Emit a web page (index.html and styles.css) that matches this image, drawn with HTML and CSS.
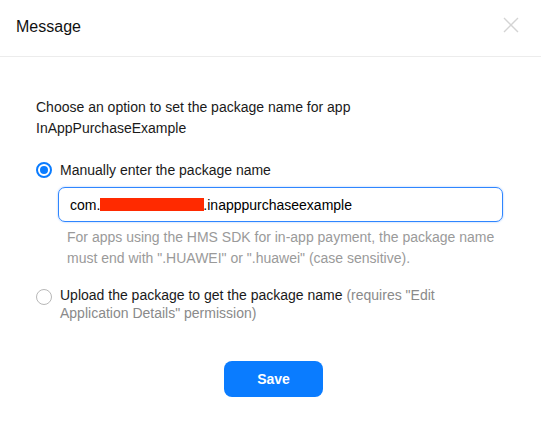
FILE: index.html
```html
<!DOCTYPE html>
<html>
<head>
<meta charset="utf-8">
<link rel="stylesheet" href="styles.css">
</head>
<body>
<div class="dialog">
  <div class="header">
    <span class="title">Message</span>
    <svg class="close" width="16" height="16" viewBox="0 0 16 16"><path d="M1 1L15 15M15 1L1 15" stroke="#d4d4d4" stroke-width="1.4" fill="none"/></svg>
  </div>
  <div class="body">
    <p class="intro">Choose an option to set the package name for app<br>InAppPurchaseExample</p>
    <div class="option first">
      <span class="radio checked"></span>
      <span class="label">Manually enter the package name</span>
    </div>
    <div class="input">com.<span class="redact"></span>.inapppurchaseexample</div>
    <p class="hint">For apps using the HMS SDK for in-app payment, the package name<br>must end with ".HUAWEI" or ".huawei" (case sensitive).</p>
    <div class="option second">
      <span class="radio"></span>
      <span class="label">Upload the package to get the package name <span class="muted">(requires "Edit Application Details" permission)</span></span>
    </div>
    <div class="actions">
      <button class="save">Save</button>
    </div>
  </div>
</div>
</body>
</html>
```
FILE: styles.css
```css
html, body {
  margin: 0;
  padding: 0;
  background: #fff;
}
body {
  font-family: "Liberation Sans", Arial, sans-serif;
  font-size: 14px;
  color: #1a1a1a;
}
.dialog {
  width: 541px;
  height: 428px;
  background: #fff;
}
.header {
  height: 57px;
  box-sizing: border-box;
  border-bottom: 1px solid #ececec;
  display: flex;
  align-items: center;
  justify-content: space-between;
  padding: 0 22px 0 16px;
}
.title {
  font-size: 16px;
  color: #111;
  margin-top: -3px;
}
.close {
  margin-top: -7px;
}
.body {
  padding: 40px 38px 0 36px;
}
.intro {
  margin: 0;
  line-height: 21px;
}
.option {
  display: flex;
  align-items: flex-start;
}
.option.first {
  margin-top: 20px;
  line-height: 22px;
}
.option.first .radio {
  margin-top: 3px;
}
.option.second {
  margin-top: 17px;
  line-height: 18px;
}
.option.second .radio {
  margin-top: 3px;
}
.radio {
  flex: none;
  width: 16px;
  height: 16px;
  box-sizing: border-box;
  border: 1px solid #b8b8b8;
  border-radius: 50%;
  margin-right: 8px;
  position: relative;
}
.radio.checked {
  border: 2px solid #0a7cff;
}
.radio.checked::after {
  content: "";
  position: absolute;
  left: 2px;
  top: 2px;
  width: 8px;
  height: 8px;
  border-radius: 50%;
  background: #0a7cff;
}
.muted {
  color: #8a8a8a;
}
.input {
  margin: 6px 0 0 22px;
  height: 35px;
  box-sizing: border-box;
  border: 1.5px solid #2f86ff;
  border-radius: 7px;
  box-shadow: 0 0 2px rgba(47, 134, 255, 0.5);
  padding: 0 11px;
  display: flex;
  align-items: center;
  color: #000;
  font-size: 14px;
}
.redact {
  display: inline-block;
  width: 104px;
  height: 13px;
  background: #ff2a00;
  margin: 0 -1px 0 0;
}
.hint {
  margin: 5px 0 0 31px;
  line-height: 21px;
  color: #9a9a9a;
}
.actions {
  display: flex;
  justify-content: center;
  margin-top: 39px;
  padding-left: 8px;
}
.save {
  width: 99px;
  height: 36px;
  border: none;
  border-radius: 8px;
  background: #0a7cff;
  color: #fff;
  font-family: "Liberation Sans", Arial, sans-serif;
  font-size: 14px;
  font-weight: bold;
  padding: 0;
}
```
